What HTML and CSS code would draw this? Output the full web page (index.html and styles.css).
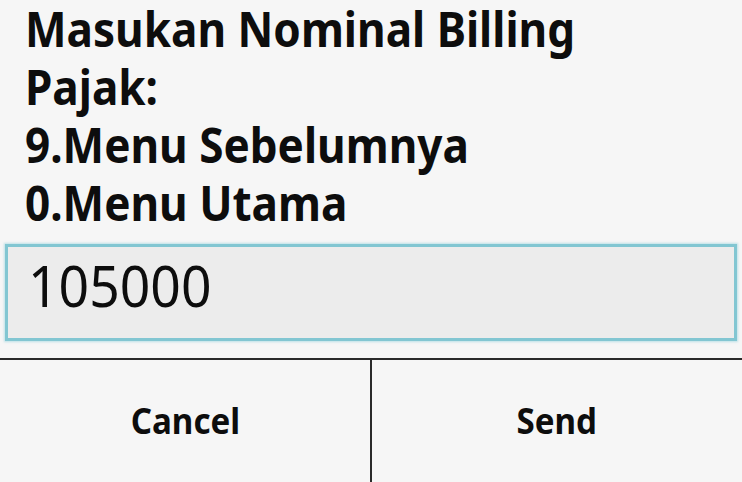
FILE: index.html
```html
<!DOCTYPE html>
<html>
<head>
<meta charset="utf-8">
<link rel="stylesheet" href="styles.css">
</head>
<body>
<div class="dialog">
  <div class="message">
    <div class="line">Masukan Nominal Billing</div>
    <div class="line">Pajak:</div>
    <div class="line">9.Menu Sebelumnya</div>
    <div class="line">0.Menu Utama</div>
  </div>
  <div class="field-wrap">
    <div class="field"><span class="value">105000</span></div>
  </div>
  <div class="buttons">
    <div class="btn"><span class="label">Cancel</span></div>
    <div class="btn"><span class="label">Send</span></div>
  </div>
</div>
</body>
</html>
```
FILE: styles.css
```css
html, body {
  margin: 0;
  padding: 0;
  background: #f6f6f6;
}
.dialog {
  width: 742px;
  height: 482px;
  display: flex;
  flex-direction: column;
  background: #f6f6f6;
  overflow: hidden;
}
.message {
  padding: 0 0 0 25px;
  height: 242px;
  font-family: "Noto Sans", "Open Sans", sans-serif;
  font-weight: 700;
  font-size: 48px;
  color: #0d0d0d;
}
.line {
  height: 58px;
  line-height: 58px;
  white-space: nowrap;
  transform: scaleX(0.918);
  transform-origin: left center;
}
.field-wrap {
  padding: 2px 5px 0 5px;
  height: 116px;
  box-sizing: border-box;
}
.field {
  height: 97px;
  box-sizing: border-box;
  border: 3px solid #82c6d2;
  box-shadow: 0 0 2px 1px rgba(150, 210, 222, 0.6);
  background: #ececec;
  font-family: "Noto Sans", sans-serif;
  font-weight: 400;
  font-size: 56px;
  color: #0d0d0d;
  padding-left: 20px;
  line-height: 77px;
}
.value {
  display: inline-block;
  transform: scaleX(0.955);
  transform-origin: left center;
}
.buttons {
  flex: 1;
  display: flex;
  border-top: 2px solid #2a2a2a;
}
.btn {
  flex: 1;
  display: flex;
  align-items: center;
  justify-content: center;
  font-family: "Noto Sans", "Open Sans", sans-serif;
  font-weight: 700;
  font-size: 36px;
  color: #0d0d0d;
  padding-bottom: 2px;
}
.label {
  display: inline-block;
  transform: scaleX(0.92);
}
.btn + .btn {
  border-left: 2px solid #2a2a2a;
}
```
